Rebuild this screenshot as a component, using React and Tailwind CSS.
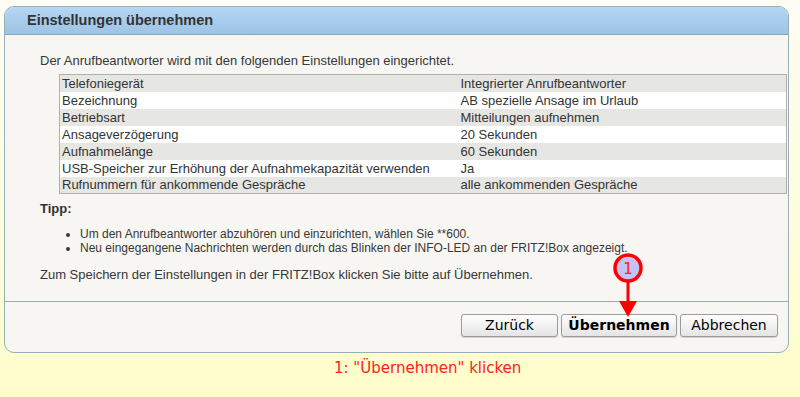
import React from "react";

const rows = [
  ["Telefoniegerät", "Integrierter Anrufbeantworter"],
  ["Bezeichnung", "AB spezielle Ansage im Urlaub"],
  ["Betriebsart", "Mitteilungen aufnehmen"],
  ["Ansageverzögerung", "20 Sekunden"],
  ["Aufnahmelänge", "60 Sekunden"],
  ["USB-Speicher zur Erhöhung der Aufnahmekapazität verwenden", "Ja"],
  ["Rufnummern für ankommende Gespräche", "alle ankommenden Gespräche"],
];

const Button = ({ label, bold, width }) => (
  <button
    className={`h-[23px] ${width} rounded-[3px] border border-[#9a9a9a] bg-gradient-to-b from-white to-[#e4e4e4] text-[14px] text-black font-['DejaVu_Sans',sans-serif] shadow-[0_1px_1px_rgba(0,0,0,0.15)] ${bold ? "font-bold" : ""}`}
  >
    {label}
  </button>
);

const App = () => {
  return (
    <div className="relative w-[800px] h-[397px] overflow-hidden bg-gradient-to-b from-[#fdfdf4] to-[#fffdca] pt-[6px] pl-[4px] font-['Liberation_Sans',Arial,sans-serif]">
      {/* dialog panel */}
      <div className="w-[785px] rounded-[10px] border border-[#96b0b6] bg-[#f7f6f2] overflow-hidden">
        <div className="h-[28px] bg-gradient-to-b from-[#b5d6f4] to-[#9ec3e4] border-b border-[#8aabb5] pl-[22px] flex items-center">
          <h1 className="text-[14.5px] font-bold text-[#333]">Einstellungen übernehmen</h1>
        </div>

        <div className="pl-[35px] pt-[18px] pb-[19px] text-[13px] text-[#383838]">
          <p className="leading-[15px]">
            Der Anrufbeantworter wird mit den folgenden Einstellungen eingerichtet.
          </p>

          <table className="mt-[6px] ml-[19px] w-[728px] border border-[#b0b0b0] border-collapse text-[13px] text-[#333]">
            <tbody>
              {rows.map(([k, v], i) => (
                <tr key={k} className={i % 2 === 0 ? "bg-[#e6e6e3]" : "bg-white"}>
                  <td className="h-[17px] w-[401px] pl-[2px] leading-[15px]">{k}</td>
                  <td className="h-[17px] leading-[15px]">{v}</td>
                </tr>
              ))}
            </tbody>
          </table>

          <p className="mt-[7px] font-bold leading-[15px] text-[#333]">Tipp:</p>
          <ul className="mt-[11px] ml-[28px] list-disc text-[12px] leading-[14px] pl-[12px]">
            <li>Um den Anrufbeantworter abzuhören und einzurichten, wählen Sie **600.</li>
            <li>Neu eingegangene Nachrichten werden durch das Blinken der INFO-LED an der FRITZ!Box angezeigt.</li>
          </ul>

          <p className="mt-[12px] leading-[15px]">
            Zum Speichern der Einstellungen in der FRITZ!Box klicken Sie bitte auf Übernehmen.
          </p>
        </div>

        {/* button bar */}
        <div className="border-t border-[#96b0b6] h-[51px] pt-[12px] pr-[10px] flex justify-end gap-[3px]">
          <Button label="Zurück" width="w-[97px]" />
          <Button label="Übernehmen" width="w-[116px]" bold />
          <Button label="Abbrechen" width="w-[98px]" />
        </div>
      </div>

      <p className="mt-[6px] ml-[330px] text-[15px] text-[#ff2020] font-['DejaVu_Sans',sans-serif] leading-[18px]">
        1: "Übernehmen" klicken
      </p>

      {/* annotation marker */}
      <svg className="absolute left-[608px] top-[251px]" width="40" height="68" viewBox="0 0 40 68">
        <line x1="20" y1="30" x2="20" y2="54" stroke="#ff0000" strokeWidth="3" />
        <polygon points="11,50 29,50 20,66" fill="#ff0000" />
        <circle cx="20" cy="17" r="13" fill="#c4c4f2" stroke="#ff0000" strokeWidth="3.5" />
        <text x="20" y="22.5" textAnchor="middle" fontSize="15" fill="#ff2020" fontFamily="DejaVu Sans, sans-serif">1</text>
      </svg>
    </div>
  );
};

export default App;
